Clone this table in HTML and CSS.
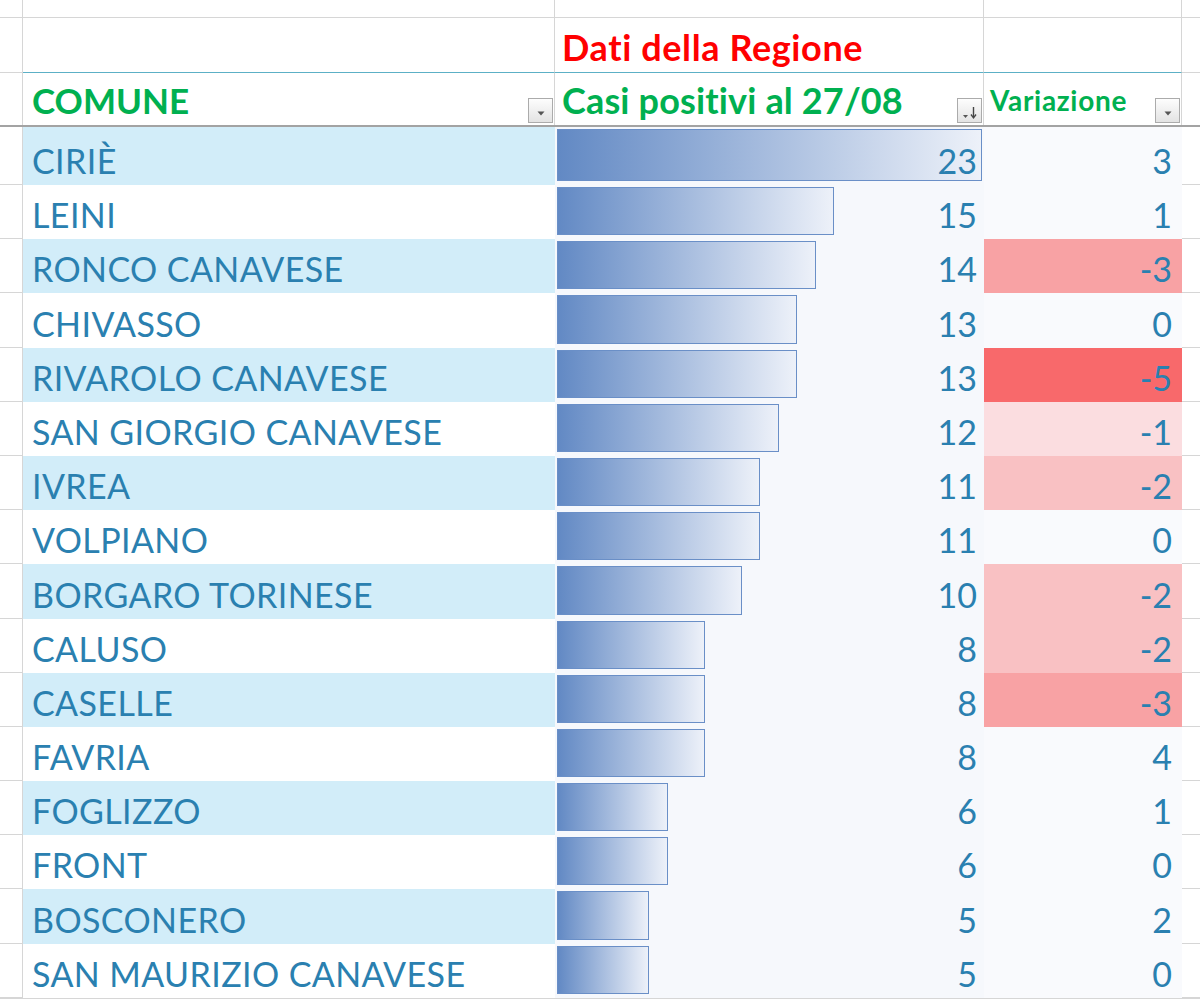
FILE: index.html
```html
<!DOCTYPE html>
<html lang="it">
<head>
<meta charset="utf-8">
<title>Casi positivi</title>
<link rel="stylesheet" href="styles.css">
</head>
<body>
<div class="sheet">
  <div class="row r-top">
    <div class="c ca"></div><div class="c cb"></div><div class="c cc"></div><div class="c cd"></div><div class="c ce"></div>
  </div>
  <div class="row r-title">
    <div class="c ca"></div>
    <div class="c cb"></div>
    <div class="c cc"><span class="t-red">Dati della Regione</span></div>
    <div class="c cd"></div>
    <div class="c ce"></div>
  </div>
  <div class="row r-head">
    <div class="c ca"></div>
    <div class="c cb"><span class="t-green">COMUNE</span><span class="fbtn"><svg width="22" height="23" viewBox="0 0 22 23"><path d="M7.5 12.5h7l-3.5 4z" fill="#555"/></svg></span></div>
    <div class="c cc"><span class="t-green">Casi positivi al 27/08</span><span class="fbtn"><svg width="22" height="23" viewBox="0 0 22 23"><path d="M4 16h5l-2.5 3z" fill="#555"/><path d="M14.5 8v10" stroke="#444" stroke-width="1.4"/><path d="M12 15.5l2.5 3.5 2.5-3.5" fill="none" stroke="#444" stroke-width="1.3"/></svg></span></div>
    <div class="c cd"><span class="t-green small">Variazione</span><span class="fbtn"><svg width="22" height="23" viewBox="0 0 22 23"><path d="M7.5 12.5h7l-3.5 4z" fill="#555"/></svg></span></div>
    <div class="c ce"></div>
  </div>

  <div class="row r-data first band">
    <div class="c ca"></div><div class="c cb">CIRIÈ</div>
    <div class="c cc"><span class="bar" style="--v:23"></span><span class="num">23</span></div>
    <div class="c cd">3</div><div class="c ce"></div>
  </div>
  <div class="row r-data">
    <div class="c ca"></div><div class="c cb">LEINI</div>
    <div class="c cc"><span class="bar" style="--v:15"></span><span class="num">15</span></div>
    <div class="c cd">1</div><div class="c ce"></div>
  </div>
  <div class="row r-data band">
    <div class="c ca"></div><div class="c cb">RONCO CANAVESE</div>
    <div class="c cc"><span class="bar" style="--v:14"></span><span class="num">14</span></div>
    <div class="c cd neg3">-3</div><div class="c ce"></div>
  </div>
  <div class="row r-data">
    <div class="c ca"></div><div class="c cb">CHIVASSO</div>
    <div class="c cc"><span class="bar" style="--v:13"></span><span class="num">13</span></div>
    <div class="c cd">0</div><div class="c ce"></div>
  </div>
  <div class="row r-data band">
    <div class="c ca"></div><div class="c cb">RIVAROLO CANAVESE</div>
    <div class="c cc"><span class="bar" style="--v:13"></span><span class="num">13</span></div>
    <div class="c cd neg5">-5</div><div class="c ce"></div>
  </div>
  <div class="row r-data">
    <div class="c ca"></div><div class="c cb">SAN GIORGIO CANAVESE</div>
    <div class="c cc"><span class="bar" style="--v:12"></span><span class="num">12</span></div>
    <div class="c cd neg1">-1</div><div class="c ce"></div>
  </div>
  <div class="row r-data band">
    <div class="c ca"></div><div class="c cb">IVREA</div>
    <div class="c cc"><span class="bar" style="--v:11"></span><span class="num">11</span></div>
    <div class="c cd neg2">-2</div><div class="c ce"></div>
  </div>
  <div class="row r-data">
    <div class="c ca"></div><div class="c cb">VOLPIANO</div>
    <div class="c cc"><span class="bar" style="--v:11"></span><span class="num">11</span></div>
    <div class="c cd">0</div><div class="c ce"></div>
  </div>
  <div class="row r-data band">
    <div class="c ca"></div><div class="c cb">BORGARO TORINESE</div>
    <div class="c cc"><span class="bar" style="--v:10"></span><span class="num">10</span></div>
    <div class="c cd neg2">-2</div><div class="c ce"></div>
  </div>
  <div class="row r-data">
    <div class="c ca"></div><div class="c cb">CALUSO</div>
    <div class="c cc"><span class="bar" style="--v:8"></span><span class="num">8</span></div>
    <div class="c cd neg2">-2</div><div class="c ce"></div>
  </div>
  <div class="row r-data band">
    <div class="c ca"></div><div class="c cb">CASELLE</div>
    <div class="c cc"><span class="bar" style="--v:8"></span><span class="num">8</span></div>
    <div class="c cd neg3">-3</div><div class="c ce"></div>
  </div>
  <div class="row r-data">
    <div class="c ca"></div><div class="c cb">FAVRIA</div>
    <div class="c cc"><span class="bar" style="--v:8"></span><span class="num">8</span></div>
    <div class="c cd">4</div><div class="c ce"></div>
  </div>
  <div class="row r-data band">
    <div class="c ca"></div><div class="c cb">FOGLIZZO</div>
    <div class="c cc"><span class="bar" style="--v:6"></span><span class="num">6</span></div>
    <div class="c cd">1</div><div class="c ce"></div>
  </div>
  <div class="row r-data">
    <div class="c ca"></div><div class="c cb">FRONT</div>
    <div class="c cc"><span class="bar" style="--v:6"></span><span class="num">6</span></div>
    <div class="c cd">0</div><div class="c ce"></div>
  </div>
  <div class="row r-data band">
    <div class="c ca"></div><div class="c cb">BOSCONERO</div>
    <div class="c cc"><span class="bar" style="--v:5"></span><span class="num">5</span></div>
    <div class="c cd">2</div><div class="c ce"></div>
  </div>
  <div class="row r-data">
    <div class="c ca"></div><div class="c cb">SAN MAURIZIO CANAVESE</div>
    <div class="c cc"><span class="bar" style="--v:5"></span><span class="num">5</span></div>
    <div class="c cd">0</div><div class="c ce"></div>
  </div>
  <div class="row r-end"></div>
</div>
</body>
</html>
```

FILE: styles.css
```css
html, body {
  margin: 0;
  padding: 0;
  background: #ffffff;
}

.sheet {
  width: 1200px;
  font-family: Lato, "Open Sans", "Liberation Sans", sans-serif;
  color: #2a80b0;
}

.row {
  display: flex;
  box-sizing: border-box;
}

.c {
  box-sizing: border-box;
  display: flex;
  align-items: flex-end;
  line-height: 31px;
  font-size: 34px;
  padding-bottom: 9px;
}

.ca { width: 23px; border-right: 1px solid #d6d6d6; border-bottom: 1px solid #d6d6d6; }
.cb { width: 532px; padding-left: 9px; }
.r-data .cb { letter-spacing: 0.4px; }
.cc { width: 429px; }
.cd { width: 198px; }
.ce { width: 18px; border-bottom: 1px solid #d6d6d6; }

/* top rows */
.r-top { height: 18px; }
.r-top .c { border-bottom: 1px solid #d6d6d6; padding-bottom: 0; }
.r-top .cb, .r-top .cc, .r-top .cd { border-right: 1px solid #d6d6d6; }

.r-title { height: 55px; }
.r-title .cb, .r-title .cc, .r-title .cd {
  border-bottom: 1px solid #5cb0c6;
  border-right: 1px solid #d6d6d6;
}
.r-title .cc { padding-left: 7px; }

.t-red {
  color: #ff0000;
  font-weight: 700;
  font-size: 36px;
  letter-spacing: 0.6px;
}

.r-head { height: 54px; border-bottom: 2px solid #a3a3a3; }
.r-head .c { padding-bottom: 9px; }
.r-head .ca, .r-head .ce { border-bottom: none; }
.r-head .cb, .r-head .cc, .r-head .cd {
  border-right: 1px solid #d6d6d6;
  justify-content: space-between;
  padding-right: 1px;
}
.r-head .cc { padding-left: 7px; }
.r-head .cd { padding-left: 6px; }

.t-green {
  color: #00b050;
  font-weight: 700;
  font-size: 35px;
}
.r-head .cc .t-green { font-size: 36px; letter-spacing: 0.15px; }
.t-green.small { font-size: 28px; letter-spacing: 0.7px; line-height: 31px; }

.fbtn {
  box-sizing: border-box;
  width: 25px;
  height: 25px;
  margin-bottom: -7px;
  border: 1px solid #ababab;
  background: linear-gradient(#fdfdfd, #e3e3e3);
  display: flex;
  align-items: center;
  justify-content: center;
}
.fbtn svg { display: block; }

/* data rows */
.r-data { height: 54.2px; }
.r-data.first { height: 58px; }

.r-data.band .cb { background: #d2edf9; }

.r-data .cc {
  background: #f6f8fc;
  display: grid;
  padding: 0;
}
.bar {
  grid-area: 1 / 1;
  justify-self: start;
  align-self: stretch;
  box-sizing: border-box;
  width: calc(var(--v) * 18.48px);
  margin: 2px 0 4px 2px;
  border: 1px solid #6a8fc7;
  background: linear-gradient(to right, #6289c4, #edf1f9);
}
.num {
  grid-area: 1 / 1;
  justify-self: end;
  align-self: end;
  padding: 0 7px 9px 0;
  position: relative;
}

.r-data .cd {
  background: #f9fafd;
  justify-content: flex-end;
  padding-right: 10px;
}
.r-data .cd.neg1 { background: #fbdde0; }
.r-data .cd.neg2 { background: #f9c1c3; }
.r-data .cd.neg3 { background: #f8a2a4; }
.r-data .cd.neg5 { background: #f8696b; }

.r-end {
  height: 10px;
  border-top: 1px solid #d6d6d6;
}
```
